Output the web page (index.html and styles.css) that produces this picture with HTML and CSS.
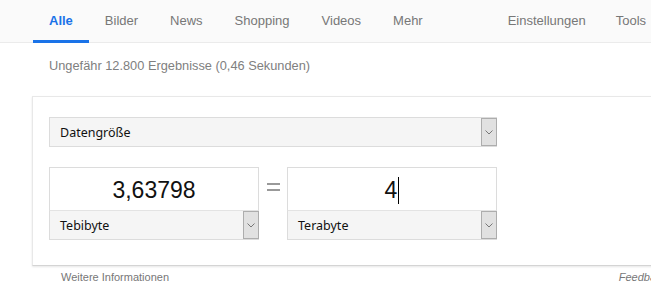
FILE: index.html
```html
<!DOCTYPE html>
<html lang="de">
<head>
    <meta charset="UTF-8">
    <meta name="viewport" content="width=device-width, initial-scale=1.0">
    <title>Datengröße umrechnen</title>
    <link rel="stylesheet" href="styles.css">
</head>
<body>

<div class="top-bar">
    <div class="tab active">Alle</div>
    <div class="tab">Bilder</div>
    <div class="tab">News</div>
    <div class="tab">Shopping</div>
    <div class="tab">Videos</div>
    <div class="tab">Mehr</div>
    <div class="tab settings">Einstellungen</div>
    <div class="tab tools">Tools</div>
</div>

<div class="result-stats">Ungefähr 12.800 Ergebnisse (0,46 Sekunden)</div>

<div class="card">
    <div class="select wide">
        <span>Datengröße</span>
        <div class="arrow">
            <svg width="8" height="5" viewBox="0 0 8 5"><path d="M0.5 0.5 L4 4 L7.5 0.5" fill="none" stroke="#777" stroke-width="1"/></svg>
        </div>
    </div>

    <div class="unit-row">
        <div class="unit-box">
            <div class="value">3,63798</div>
            <div class="select">
                <span>Tebibyte</span>
                <div class="arrow">
                    <svg width="8" height="5" viewBox="0 0 8 5"><path d="M0.5 0.5 L4 4 L7.5 0.5" fill="none" stroke="#777" stroke-width="1"/></svg>
                </div>
            </div>
        </div>
        <div class="equals">
            <span class="eq-line"></span>
            <span class="eq-line"></span>
        </div>
        <div class="unit-box">
            <div class="value">4<span class="caret"></span></div>
            <div class="select">
                <span>Terabyte</span>
                <div class="arrow">
                    <svg width="8" height="5" viewBox="0 0 8 5"><path d="M0.5 0.5 L4 4 L7.5 0.5" fill="none" stroke="#777" stroke-width="1"/></svg>
                </div>
            </div>
        </div>
    </div>
</div>

<div class="card-footer">
    <span>Weitere Informationen</span>
    <span class="feedback">Feedback</span>
</div>

</body>
</html>
```

FILE: styles.css
```css
body {
    font-family: "Liberation Sans", Arial, sans-serif;
    background-color: white;
    margin: 0;
    width: 651px;
    overflow: hidden;
}

.top-bar {
    display: flex;
    height: 43px;
    padding-left: 33px;
    background-color: #fafafa;
    border-bottom: 1px solid #ebebeb;
    box-sizing: border-box;
    white-space: nowrap;
}

.tab {
    padding: 0 16px;
    height: 40px;
    line-height: 41px;
    font-size: 13px;
    color: #777;
    border-bottom: 3px solid transparent;
}

.tab.active {
    color: #1a73e8;
    font-weight: bold;
    border-bottom-color: #1a73e8;
}

.tab.settings {
    margin-left: 53px;
}

.tab.tools {
    padding-left: 14px;
}

.result-stats {
    padding: 15px 0 0 49px;
    height: 38px;
    font-size: 12.8px;
    color: #808080;
    box-sizing: border-box;
}

.card {
    margin-left: 32px;
    width: 664px;
    margin-top: 15px;
    padding: 20px 16px 25px 16px;
    border: 1px solid #e8e8e8;
    border-bottom: 1px solid #d4d4d4;
    box-shadow: 0 1px 2px rgba(0, 0, 0, 0.1);
    box-sizing: border-box;
    background: white;
}

.select {
    display: flex;
    align-items: center;
    height: 30px;
    background-color: #f5f5f5;
    border: 1px solid #dcdcdc;
    box-sizing: border-box;
    font-family: "Noto Sans", "Open Sans", sans-serif;
    font-size: 12.5px;
    color: #111;
}

.select span {
    flex: 1;
    padding-left: 10px;
}

.select.wide {
    width: 448px;
}

.arrow {
    width: 16px;
    height: 28px;
    margin-right: -1px;
    background-color: #e1e1e1;
    border: 1px solid #adadad;
    box-sizing: border-box;
    display: flex;
    align-items: center;
    justify-content: center;
}

.unit-row {
    display: flex;
    margin-top: 20px;
}

.unit-box {
    width: 210px;
}

.value {
    height: 43px;
    border: 1px solid #dcdcdc;
    border-bottom: none;
    box-sizing: border-box;
    display: flex;
    align-items: center;
    justify-content: center;
    font-size: 23px;
    color: #111;
    padding-top: 2px;
}

.unit-box .select {
    border-top: 1px solid #e3e3e3;
}

.caret {
    display: inline-block;
    width: 1px;
    height: 27px;
    background: black;
    margin-left: 1px;
}

.equals {
    width: 28px;
    display: flex;
    flex-direction: column;
    align-items: center;
    gap: 4px;
    padding-top: 16px;
    box-sizing: border-box;
}

.eq-line {
    width: 13px;
    height: 2px;
    background: #999;
}

.card-footer {
    display: flex;
    justify-content: space-between;
    margin-left: 32px;
    width: 664px;
    padding: 5px 29px 0 29px;
    box-sizing: border-box;
    font-size: 11px;
    color: #777;
}

.feedback {
    font-style: italic;
}
```
